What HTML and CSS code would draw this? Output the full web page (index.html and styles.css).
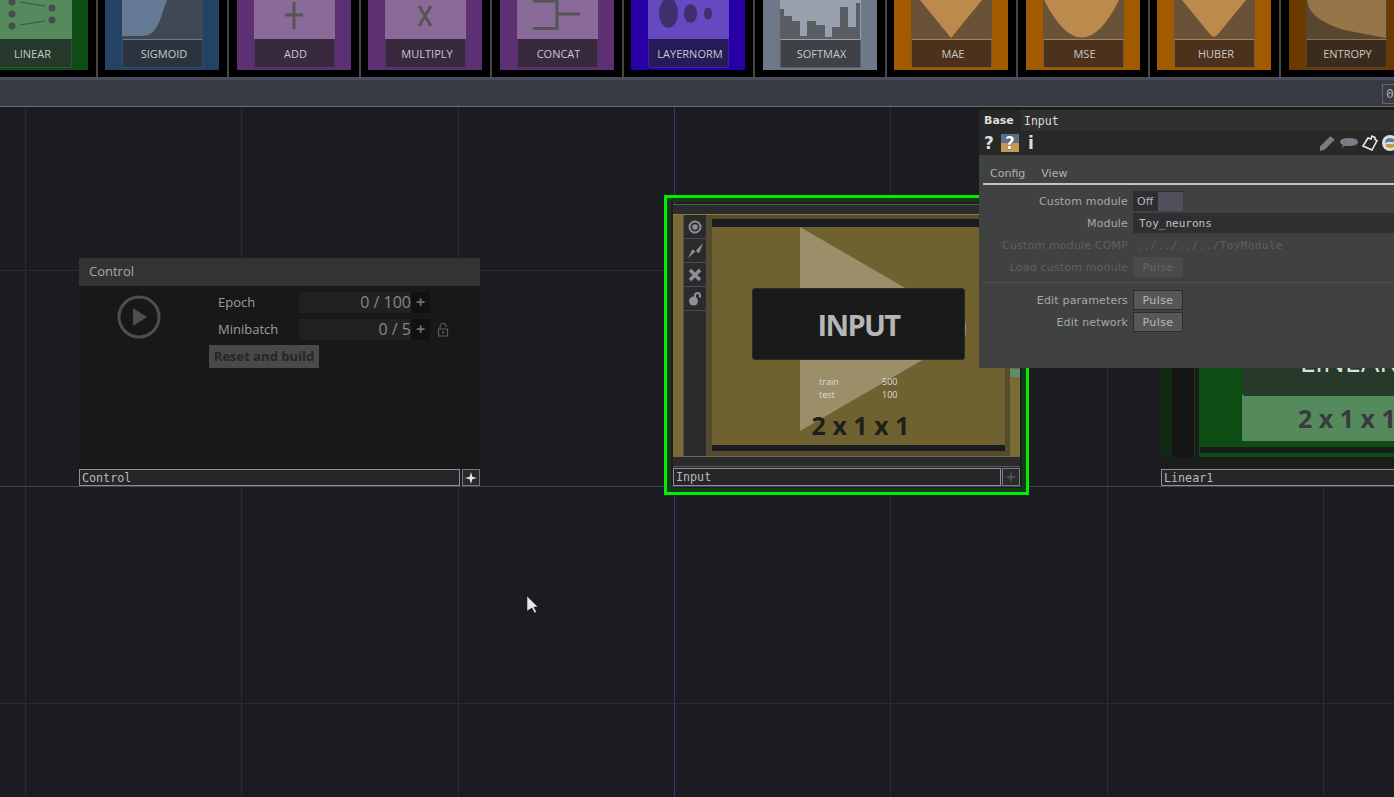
FILE: index.html
```html
<!DOCTYPE html>
<html lang="en">
<head>
<meta charset="utf-8">
<title>Toy neurons</title>
<link rel="stylesheet" href="styles.css">
</head>
<body>
<div class="app">
  <div class="palette">
    <div class="cell"><div class="tile linear"><svg class="art" viewBox="0 0 81 39"><g class="ink"><circle cx="21" cy="2" r="3.500"/><circle cx="21" cy="14" r="3.500"/><circle cx="21" cy="26" r="3.500"/><circle cx="61" cy="8" r="3.500"/><circle cx="61" cy="20" r="3.500"/></g><path class="thin" d="M29 2 54 6M29 25 54 21"/></svg><div class="lbl">LINEAR</div></div></div>
    <div class="cell"><div class="tile sigmoid"><svg class="art" viewBox="0 0 81 39"><path class="fill" d="M0 0H45C38 18 36 36 20 36H0Z"/></svg><div class="lbl">SIGMOID</div></div></div>
    <div class="cell"><div class="tile purple"><svg class="art" viewBox="0 0 81 39"><path class="stroke" d="M31 15H49M40 2V29"/></svg><div class="lbl">ADD</div></div></div>
    <div class="cell"><div class="tile purple"><svg class="art" viewBox="0 0 81 39"><path class="stroke" d="M34 6 46 26M46 6 34 26"/></svg><div class="lbl">MULTIPLY</div></div></div>
    <div class="cell"><div class="tile purple"><svg class="art" viewBox="0 0 81 39"><path class="stroke" d="M16 1H40V28.500H16M40 14H63"/></svg><div class="lbl">CONCAT</div></div></div>
    <div class="cell"><div class="tile norm"><svg class="art" viewBox="0 0 81 39"><ellipse class="blob" cx="20.500" cy="13" rx="9.500" ry="15"/><ellipse class="blob" cx="42.500" cy="13.500" rx="6.500" ry="9.500"/><ellipse class="blob" cx="60" cy="13.500" rx="4" ry="6"/></svg><div class="lbl">LAYERNORM</div></div></div>
    <div class="cell"><div class="tile soft"><svg class="art" viewBox="0 0 81 39"><path class="bars" d="M0 9H4V16H12V21H20V36H27V21H36V25H45V37H52V27H60V7H68V27H76V3H80V39H0Z"/></svg><div class="lbl">SOFTMAX</div></div></div>
    <div class="cell"><div class="tile orange"><svg class="art" viewBox="0 0 81 39"><path class="curve" d="M9 0H71L40 38Z"/></svg><div class="lbl">MAE</div></div></div>
    <div class="cell"><div class="tile orange"><svg class="art" viewBox="0 0 81 39"><path class="curve" d="M1 0Q39 75 76 0Z"/></svg><div class="lbl">MSE</div></div></div>
    <div class="cell"><div class="tile orange"><svg class="art" viewBox="0 0 81 39"><path class="curve" d="M8 0H72L45 33Q40 40 35 33Z"/></svg><div class="lbl">HUBER</div></div></div>
    <div class="cell"><div class="tile brown"><svg class="art" viewBox="0 0 81 39"><path class="curve" d="M1 0C3 14 14 22 38 30L80 38V0Z"/></svg><div class="lbl">ENTROPY</div></div></div>
  </div>
  <div class="toolbar"><span class="frame-box">0</span></div>

  <main class="canvas">
    <section class="node control-node">
      <div class="control-head">Control</div>
      <div class="control-body">
        <svg class="play" viewBox="0 0 44 44"><circle cx="22" cy="22" r="20" /><path d="M16 13 30 22 16 31Z"/></svg>
        <div class="control-form">
          <div class="metric"><span class="metric-name">Epoch</span><span class="metric-value">0 / 100</span><span class="metric-plus">+</span></div>
          <div class="metric"><span class="metric-name">Minibatch</span><span class="metric-value">0 / 5</span><span class="metric-plus">+</span>
            <svg class="mini-lock" viewBox="0 0 12 14"><path d="M3 6V3.500A3 3 0 0 1 9 3.500V4M1.500 6H10.500V13H1.500Z"/><rect x="5" y="8.500" width="2" height="2"/></svg></div>
          <div class="reset">Reset and build</div>
        </div>
      </div>
    </section>
    <div class="name-row control-name"><span class="name-field">Control</span><span class="name-btn on"><svg viewBox="0 0 12 12"><path d="M6 0 7.300 4.700 12 6 7.300 7.300 6 12 4.700 7.300 0 6 4.700 4.700Z"/></svg></span></div>

    <div class="select-frame"></div>
    <section class="node input-node">
      <div class="node-top"></div>
      <div class="input-main">
        <div class="input-edge"></div>
        <div class="side">
          <div class="side-btn"><svg viewBox="0 0 14 14"><circle cx="7" cy="7" r="5.500" class="ring"/><circle cx="7" cy="7" r="2.800"/></svg></div>
          <div class="side-btn"><svg class="bolt" viewBox="0 0 15 15"><path d="M0 15 4.500 6 7 8.500 15 0 11 10.500 8 8Z"/></svg></div>
          <div class="side-btn"><svg viewBox="0 0 14 14"><path class="cross" d="M2 2 12 12M12 2 2 12"/></svg></div>
          <div class="side-btn"><svg viewBox="0 0 14 14"><circle cx="5.500" cy="9" r="4.500"/><path class="ring" d="M7 5V3.500A2.500 2.500 0 0 1 12 3.500V5.500"/></svg></div>
        </div>
        <div class="input-art">
          <div class="black-bar top"></div>
          <div class="input-stage">
            <svg class="tri" viewBox="0 0 166 204"><path d="M0 0 176 102 0 204Z"/></svg>
            <div class="title-box">INPUT</div>
            <div class="stats"><span>train</span><span>500</span><span>test</span><span>100</span></div>
            <div class="shape">2 x 1 x 1</div>
          </div>
          <div class="black-bar bottom"></div>
        </div>
        <div class="input-right"><span class="green-chip"></span></div>
      </div>
      <div class="node-foot"></div>
      <div class="name-row input-name"><span class="name-field">Input</span><span class="name-btn"><svg viewBox="0 0 12 12"><path d="M6 0 7.300 4.700 12 6 7.300 7.300 6 12 4.700 7.300 0 6 4.700 4.700Z"/></svg></span></div>
    </section>

    <section class="node linear-node">
      <div class="lin-left"><span class="lin-a"></span><span class="lin-b"></span></div>
      <div class="lin-main">
        <div class="lin-panel">
          <div class="title-box lin-title">LINEAR</div>
          <div class="lin-shape">2 x 1 x 1</div>
        </div>
        <div class="lin-bar"></div>
      </div>
    </section>
    <div class="name-row linear-name"><span class="name-field">Linear1</span></div>

    <aside class="params">
      <div class="p-title"><span class="p-type">Base</span><span class="p-name">Input</span></div>
      <div class="p-tools">
        <span class="q">?</span><span class="q q-box">?</span><span class="q">i</span>
        <span class="p-tools-right">
          <svg viewBox="0 0 14 14"><path class="gray" d="M0 14V10L9 1 13 4 4 13Z"/></svg>
          <svg class="wide" viewBox="0 0 18 13"><path class="gray" d="M0 5Q0 1 9 1T18 5 9 9L4 9 2 12 3 8Q0 7 0 5Z"/></svg>
          <svg viewBox="0 0 16 16"><path class="white" d="M1 11 6 3 9 4 10 1 13 2.500 13 4.500 15 5.500 10 15Z"/></svg>
          <svg viewBox="0 0 16 16"><circle cx="8" cy="8" r="8" class="py-w"/><path class="py-b" d="M3 8Q3 3 8 3L12 4V7H6Z"/><path class="py-y" d="M13 8Q13 13 8 13L4 12V9H10Z"/></svg>
        </span>
      </div>
      <div class="p-body">
        <div class="p-tabs"><span>Config</span><span>View</span></div>
        <div class="p-row"><label>Custom module</label><span class="toggle"><span>Off</span><i></i></span></div>
        <div class="p-row"><label>Module</label><span class="text-val">Toy_neurons</span></div>
        <div class="p-row off"><label>Custom module COMP</label><span class="path-val">../../../../ToyModule</span></div>
        <div class="p-row off"><label>Load custom module</label><span class="pulse dis">Pulse</span></div>
        <div class="p-sep"></div>
        <div class="p-row"><label>Edit parameters</label><span class="pulse">Pulse</span></div>
        <div class="p-row"><label>Edit network</label><span class="pulse">Pulse</span></div>
      </div>
    </aside>

    <svg class="cursor" viewBox="0 0 12 17"><path d="M0 0 11 11H7L9.500 16 7.500 17 5 12 0 15Z"/></svg>
  </main>
</div>
</body>
</html>
```

FILE: styles.css
```css
* { box-sizing: border-box; }
html, body { margin: 0; height: 100%; background: #1a1c21; overflow: hidden; }
.app { width: 1394px; height: 797px; display: flex; flex-direction: column; overflow: hidden; font-family: "DejaVu Sans", sans-serif; }

.palette { height: 77px; flex: none; background: #000; display: flex; margin-left: -34px; }
.cell { flex: 0 0 131.5px; padding-left: 7.5px; border-right: 2px solid #474747; height: 77px; }
.tile { width: 114px; height: 70px; padding: 0 16px 2px 17px; display: flex; flex-direction: column; }
.art { display: block; width: 81px; height: 39px; flex: none; }
.lbl { height: 29px; border-top: 1px solid var(--edge); border-left: 1px solid var(--edge2); border-right: 1px solid var(--edge2); border-bottom: 1px solid var(--edge2); border-radius: 0 0 2px 2px; background: var(--label); color: #c8c8c8; font: 11px/27px "Open Sans", sans-serif; text-align: center; padding-left: 3px; }
.linear { background: #0d4d14; --label: #26392a; --edge: #26392a; --edge2: #33503a; }
.linear .art { background: #558a5d; }
.ink circle { fill: #4a4a4a; }
.thin { stroke: #4a4a4a; stroke-width: 1; fill: none; }
.sigmoid { background: #244264; --label: #2b333e; --edge: #68788e; --edge2: #3d4c62; }
.sigmoid .art { background: #404853; }
.fill { fill: #647a94; }
.purple { background: #5d2f73; --label: #38293f; --edge: #38293f; --edge2: #4c3858; }
.purple .art { background: #8a6a99; }
.stroke { fill: none; stroke: #555; stroke-width: 3; }
.norm { background: #2900a8; --label: #261a58; --edge: #261a58; --edge2: #3424a0; }
.norm .art { background: #6648c0; }
.blob { fill: #3e2f6e; }
.soft { background: #6d7989; --label: #3e4247; --edge: #9aa0aa; --edge2: #5a6068; }
.soft .art { background: #98a0ae; }
.bars { fill: #5a5e62; }
.orange { background: #a15a00; --label: #4c321c; --edge: #a8854f; --edge2: #7a5a30; }
.orange .art { background: #6a5238; }
.brown { background: #6a3a00; --label: #3a2b1c; --edge: #8a7350; --edge2: #5a4630; }
.brown .art { background: #58462f; }
.curve { fill: #bc8a4c; }
.brown .curve { fill: #967548; }

.toolbar { height: 30px; flex: none; background: #383b44; border-top: 3px solid #4a4d5c; border-bottom: 1px solid #6a6a6a; display: flex; justify-content: flex-end; align-items: center; }
.frame-box { width: 12px; height: 20px; border: 1px solid #666; border-right: 0; color: #aaa; font: 13px/18px "DejaVu Sans Mono", monospace; padding-left: 3px; overflow: hidden; margin-top: 1px; }

.canvas { position: relative; flex: 1; overflow: hidden; background-color: #1a1c21;
  background-image:
    linear-gradient(#2b2d33, #2b2d33), linear-gradient(#44415f, #44415f), linear-gradient(#2b2d33, #2b2d33),
    linear-gradient(#2b2d33, #2b2d33), linear-gradient(#2b2d33, #2b2d33), linear-gradient(#2b2d33, #2b2d33),
    linear-gradient(#3a3670, #3a3670), linear-gradient(#2b2d33, #2b2d33), linear-gradient(#2b2d33, #2b2d33), linear-gradient(#2b2d33, #2b2d33);
  background-repeat: no-repeat;
  background-size: 100% 1px, 100% 1px, 100% 1px, 1px 100%, 1px 100%, 1px 100%, 1px 100%, 1px 100%, 1px 100%, 1px 100%;
  background-position: 0 163px, 0 379px, 0 596px, 25px 0, 241px 0, 458px 0, 674px 0, 890px 0, 1107px 0, 1323px 0;
}
.node { position: absolute; }

.control-node { left: 79px; top: 151px; width: 401px; height: 211px; background: #181818; }
.control-head { height: 28px; background: #333; color: #a8a8a8; font: 13px/27px "Open Sans", sans-serif; padding-left: 10px; }
.control-body { display: flex; align-items: flex-start; }
.play { width: 44px; height: 44px; margin: 9px 0 0 38px; flex: none; }
.play circle { fill: none; stroke: #4e4e4e; stroke-width: 3; }
.play path { fill: #4e4e4e; }
.control-form { margin-left: 48px; padding-top: 6px; display: flex; flex-direction: column; gap: 6px; }
.metric { display: flex; align-items: center; height: 21px; font-family: "Open Sans", sans-serif; }
.metric-name { width: 81px; margin-left: 9px; color: #9d9d9d; font-size: 13px; line-height: 19px; margin-bottom: 1px; }
.metric-value { width: 112px; background: #212121; color: #878787; font-size: 16px; line-height: 21px; text-align: right; }
.metric-plus { width: 19px; background: #111; color: #707070; font-weight: 700; font-size: 16px; line-height: 21px; text-align: center; }
.mini-lock { width: 12px; height: 14px; margin-left: 7px; }
.mini-lock path { fill: none; stroke: #5a5a5a; stroke-width: 1.200; }
.mini-lock rect { fill: #5a5a5a; }
.reset { width: 110px; height: 23px; margin-top: -1px; background: #494949; color: #262626; font: 700 13px/22px "Open Sans", sans-serif; text-align: center; }

.name-row { display: flex; position: absolute; height: 17px; gap: 1px; font: 11.700px/16px "DejaVu Sans Mono", monospace; color: #bbb; }
.name-field { flex: 1; background: #262628; border: 1px solid #8e8e96; padding-left: 2px; overflow: hidden; }
.name-btn { width: 18px; background: #2a2a2c; border: 1px solid #77777f; display: flex; align-items: center; justify-content: center; }
.name-btn svg { width: 12px; height: 12px; fill: #4e4e50; }
.name-btn.on svg { fill: #e8e8e8; }
.control-name { left: 79px; top: 362px; width: 401px; gap: 2px; }
.linear-name { left: 1161px; top: 362px; width: 240px; }

.select-frame { position: absolute; left: 664px; top: 88px; width: 365px; height: 300px; border: 3px solid #05ec05; outline: 4px solid #123c16; outline-offset: -7px; }
.input-node { left: 673px; top: 97px; width: 347px; height: 282px; background: #2b2b2b; display: flex; flex-direction: column; }
.node-top { height: 10px; flex: none; background: #2b2b2b; border-top: 1px solid #55555c; }
.input-main { height: 243px; flex: none; display: flex; background: #7a6a34; border-top: 1px solid #8a7a3c; border-bottom: 1px solid #6a6a50; }
.input-edge { width: 10px; flex: none; }
.side { width: 24px; flex: none; background: #2b2b2b; border: 1px solid #4b4b55; border-width: 0 1px; }
.side-btn { height: 24px; border-bottom: 1px solid #4b4b55; display: flex; align-items: center; justify-content: center; }
.side-btn svg { width: 14px; height: 14px; fill: #8e8e9c; }
.side-btn svg.bolt { width: 15px; height: 15px; }
.side .ring { fill: none; stroke: #8e8e9c; stroke-width: 2; }
.side .cross { stroke: #8e8e9c; stroke-width: 3.500; fill: none; }
.input-art { width: 298px; flex: none; padding: 4px 0 5px 5px; background: #564c2c; display: flex; flex-direction: column; }
.black-bar { background: #1a1c20; flex: none; }
.black-bar.top { height: 8px; }
.black-bar.bottom { height: 6px; }
.input-stage { flex: 1; position: relative; background: #6f6230; }
.tri { position: absolute; left: 88px; top: 0; width: 166px; height: 204px; }
.tri path { fill: #9a8f68; }
.title-box { background: #1a1a1a; border: 1px solid #2c2a22; border-radius: 3px; color: #b6b6b6; font: 700 29px/71px "Open Sans", sans-serif; letter-spacing: -1.600px; text-align: center; }
.input-stage .title-box { position: absolute; left: 40px; top: 61px; width: 213px; height: 72px; }
.stats { position: absolute; left: 107px; top: 148px; display: grid; grid-template-columns: 63px auto; font: 9px/13px "Open Sans", sans-serif; color: #ddd; }
.shape { position: absolute; left: 0; right: 0; top: 181px; padding-left: 4px; text-align: center; color: #1f1f1f; font: 700 25px/34px "Open Sans", sans-serif; }
.input-right { flex: 1; position: relative; border-left: 5px solid #564c2c; }
.green-chip { position: absolute; left: 0; top: 154px; width: 10px; height: 8px; background: #5f8e6a; }
.node-foot { height: 10px; flex: none; background: #2b2b2b; border-bottom: 1px solid #55555c; }
.input-name { left: 0; top: 264px; width: 347px; height: 18px; }

.linear-node { left: 1161px; top: 97px; width: 240px; height: 265px; background: #1b1d1b; display: flex; }
.lin-left { width: 34px; display: flex; flex: none; height: 253px; border-right: 1px solid #2a2a2a; }
.lin-a { width: 11px; background: #0f2a12; border-right: 1px solid #222; }
.lin-b { flex: 1; background: #141514; }
.lin-main { flex: 1; background: #0d4d14; height: 253px; margin-left: 4px; display: flex; flex-direction: column; }
.lin-panel { margin-left: 43px; height: 237px; flex: none; padding-top: 120px; background: #558a5d; position: relative; }
.lin-title { width: 213px; height: 72px; background: #26392a; border-color: #26392a; color: #ddd; white-space: nowrap; font-weight: 400; letter-spacing: 0; }
.lin-shape { color: #3a3a3e; font: 700 25px/45px "Open Sans", sans-serif; margin-left: 56px; white-space: nowrap; }
.lin-bar { height: 6px; margin-top: 6px; background: #1a1c20; margin-left: 1px; }

.params { position: absolute; left: 979px; top: 0; width: 415px; height: 261px; background: #404241; display: flex; flex-direction: column; }
.p-title { height: 24px; flex: none; display: flex; background: #303030; border-top: 3px solid #1c1c1c; font: 11.500px/22px "DejaVu Sans Mono", monospace; color: #ddd; }
.p-type { font: 700 11px/22px "DejaVu Sans", sans-serif; width: 42px; padding-left: 5px; background: #282828; color: #ddd; }
.p-name { padding-left: 3px; }
.p-tools { height: 24px; flex: none; display: flex; align-items: center; background: #272929; padding-left: 3px; gap: 5px; }
.q { font: 700 17px/24px "DejaVu Sans", sans-serif; color: #ddd; width: 14px; text-align: center; }
.q-box { width: 18px; height: 18px; line-height: 18px; background: linear-gradient(#5c6e8a 50%, #c49a50 50%); color: #fff; text-shadow: 0 0 1px #000; }
.p-tools-right { margin-left: auto; display: flex; align-items: center; gap: 4px; margin-right: -4px; }
.p-tools-right svg { width: 16px; height: 16px; }
.p-tools-right svg.wide { width: 18px; height: 13px; }
.gray { fill: #7c7c84; }
.white { fill: #2a2a2a; stroke: #eee; stroke-width: 1.500; }
.py-w { fill: #ddd; }
.py-b { fill: #5a7f9f; }
.py-y { fill: #c89a3c; }
.p-body { flex: 1; font: 11px/22px "DejaVu Sans", sans-serif; color: #a8a8a8; }
.p-tabs { height: 30px; margin: 0 0 5px 4px; border-bottom: 2px solid #c4c4c4; display: flex; gap: 16px; padding: 9px 0 0 7px; line-height: 20px; color: #b0b0b0; }
.p-row { height: 22px; display: flex; align-items: center; }
.p-row label { width: 149px; flex: none; text-align: right; letter-spacing: .17px; padding-top: 2px; }
.p-row.off { color: #5e605f; }
.toggle { margin-left: 5px; display: flex; align-items: center; height: 20px; width: 50px; background: #2e2e30; padding: 0 0 0 4px; color: #b8b8b8; }
.toggle span { width: 21px; padding-top: 2px; }
.toggle i { width: 25px; height: 19px; background: #50505c; display: block; }
.text-val { margin-left: 5px; flex: 1; height: 20px; background: #2f2f31; padding-left: 6px; color: #c0c0c0; font: 11px/22px "DejaVu Sans Mono", monospace; }
.path-val { margin-left: 5px; padding: 2px 0 0 3px; font: 11px/20px "DejaVu Sans Mono", monospace; letter-spacing: .36px; color: #5e605f; }
.pulse { margin-left: 5px; width: 50px; height: 20px; background: #575757; border: 1px solid #2c2c2c; text-align: center; font: 11px/20px "DejaVu Sans", sans-serif; color: #b8b8b8; letter-spacing: .4px; }
.pulse.dis { background: #4a4a4a; border-color: #4a4a4a; color: #666; }
.p-sep { height: 1px; margin: 4px 0 6px 4px; background: #515352; }

.cursor { position: absolute; left: 527px; top: 489px; width: 12px; height: 17px; }
.cursor path { fill: #e8e8e8; stroke: #111; stroke-width: .5; }
```
